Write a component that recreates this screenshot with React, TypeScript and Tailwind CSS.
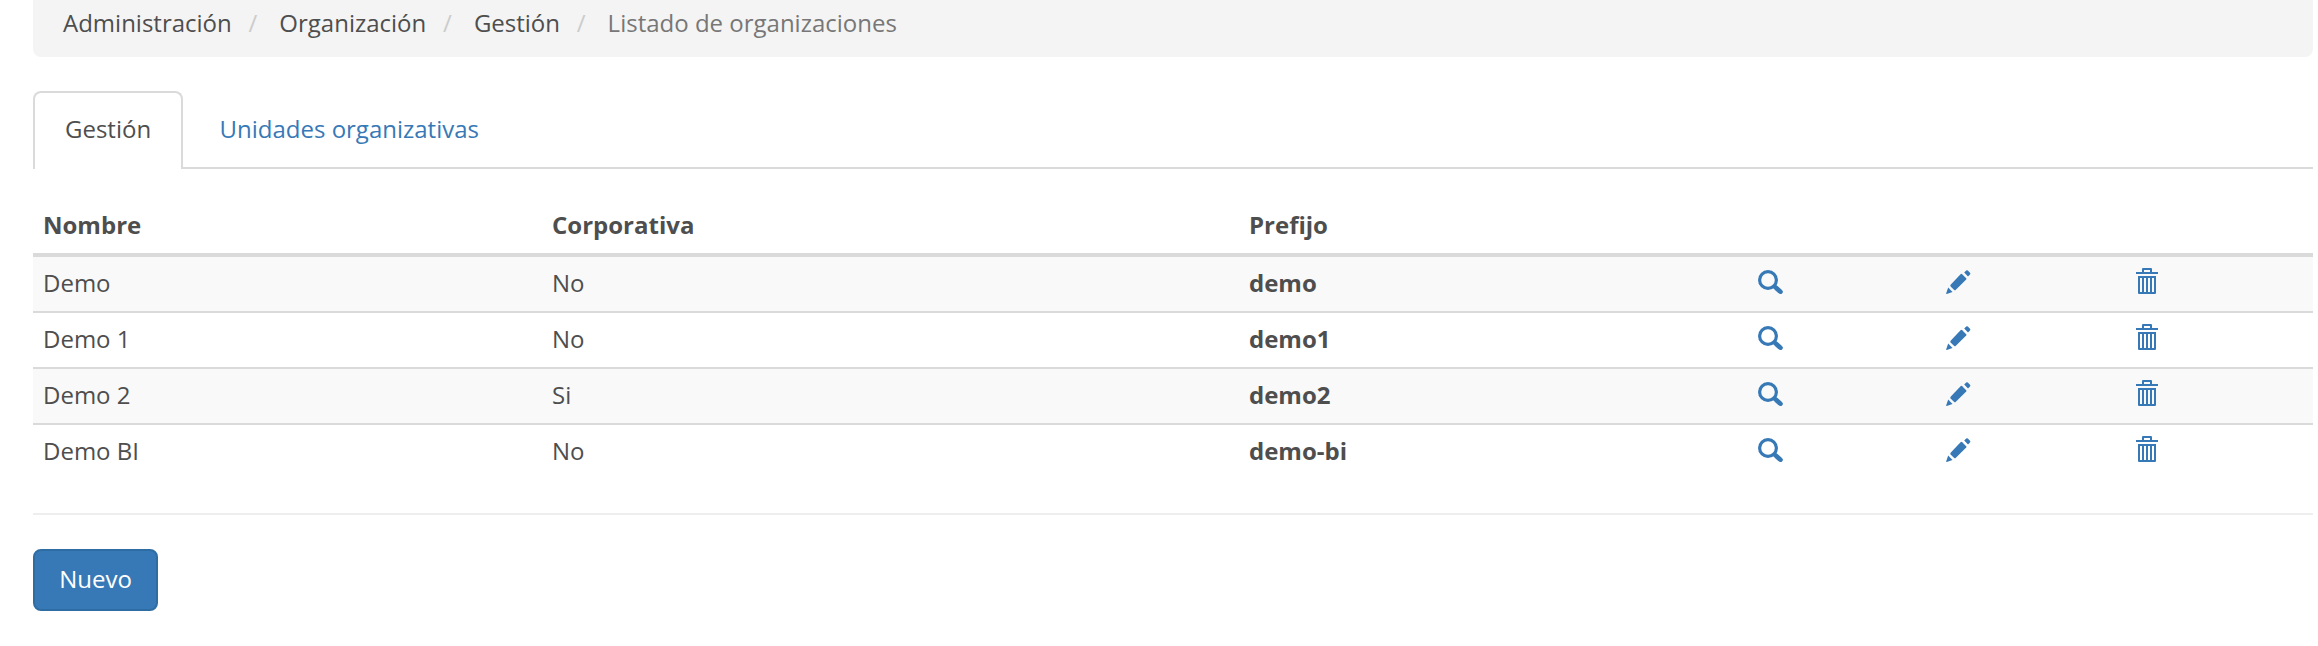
import React from "react";

type Org = { name: string; corporate: string; prefix: string };

const organizations: Org[] = [
  { name: "Demo", corporate: "No", prefix: "demo" },
  { name: "Demo 1", corporate: "No", prefix: "demo1" },
  { name: "Demo 2", corporate: "Si", prefix: "demo2" },
  { name: "Demo BI", corporate: "No", prefix: "demo-bi" },
];

const columns = "grid grid-cols-[509px_697px_509px_188px_189px_188px]";

function SearchIcon() {
  return (
    <svg className="block h-[26px] w-[26px]" viewBox="0 0 26 26" fill="none" stroke="#3779b6">
      <circle cx="10" cy="12" r="8.4" strokeWidth="3.2" />
      <path d="M15.5 17.5L22.2 23.6" strokeWidth="4.4" />
      <path d="M19 20.6L22.6 23.8" strokeWidth="4.4" strokeLinecap="round" />
    </svg>
  );
}

function PencilIcon() {
  return (
    <svg className="block h-[26px] w-[26px]" viewBox="0 0 26 26" fill="#3779b6">
      <path d="M18.2 4.6L20.2 2.6Q21 1.9 21.8 2.6L24 4.8Q24.8 5.6 24 6.4L22 8.4Z" />
      <path d="M14.8 6.1Q15.5 5.6 16.2 6.2L20.2 10.2Q20.8 10.8 20.2 11.5L9.6 22Q8.9 22.6 8.2 22L4.6 18.4Q4 17.6 4.6 16.8Z" />
      <path d="M2.2 19.6L6.5 23.9L0.8 25.9Q0 26 0.2 25.2Z" />
    </svg>
  );
}

function TrashIcon() {
  return (
    <svg className="block h-[26px] w-[26px]" viewBox="0 0 26 26" fill="#3779b6">
      <path
        fillRule="evenodd"
        d="M8 0H16Q17 0 17 1V4H23V6H1V4H7V1Q7 0 8 0ZM9 2V4H15V2ZM3 8H21V25Q21 26 20 26H4Q3 26 3 25ZM5 10V24H7V10ZM9 10V24H11V10ZM13 10V24H15V10ZM17 10V24H19V10Z"
      />
    </svg>
  );
}

function Breadcrumb() {
  const parents = ["Administración", "Organización", "Gestión"];
  return (
    <nav className="flex h-[57px] rounded-b-lg bg-[#f4f4f4] pt-[6px] pl-[30px]">
      {parents.map((item) => (
        <React.Fragment key={item}>
          <a>{item}</a>
          <span className="w-[47.6px] pl-[16.7px] text-[#ccc]">/</span>
        </React.Fragment>
      ))}
      <span className="text-[#777]">Listado de organizaciones</span>
    </nav>
  );
}

export default function App() {
  return (
    <main className="h-[646px] w-full overflow-hidden bg-white pr-[5px] pl-[33px] font-['Open_Sans',sans-serif] text-[24px] leading-[34px] text-[#4e4e4e]">
      <Breadcrumb />
      <div className="mt-[34px] flex h-[78px] border-b-2 border-[#dadada]">
        <a className="h-[78px] w-[150px] rounded-t-lg border-2 border-b-0 border-[#dadada] bg-white pt-[19px] pl-[30px]">
          Gestión
        </a>
        <a className="pt-[21px] pl-[36.5px] text-[#3779b6]">Unidades organizativas</a>
      </div>
      <div role="table" className="mt-[30px]">
        <div role="row" className={`${columns} h-[58px] border-b-4 border-[#dadada] pt-[9px] font-bold`}>
          <span className="pl-[10px]">Nombre</span>
          <span className="pl-[10px]">Corporativa</span>
          <span className="pl-[10px]">Prefijo</span>
        </div>
        {organizations.map((org) => (
          <div
            role="row"
            key={org.name}
            className={`${columns} h-[56px] border-b-2 border-[#dadada] pt-[9px] last:border-b-0 odd:bg-white even:bg-[#f9f9f9]`}
          >
            <span className="pl-[10px]">{org.name}</span>
            <span className="pl-[10px]">{org.corporate}</span>
            <span className="pl-[10px] font-bold">{org.prefix}</span>
            <a className="pt-[2px] pl-[10px]"><SearchIcon /></a>
            <a className="pt-[2px] pl-[10px]"><PencilIcon /></a>
            <a className="pt-[2px] pl-[10px]"><TrashIcon /></a>
          </div>
        ))}
      </div>
      <hr className="mt-[32px] border-t-2 border-[#eee]" />
      <button className="mt-[34px] block h-[62px] w-[125px] rounded-lg border-2 border-[#2e6da4] bg-[#3779b6] pb-[2px] text-white">
        Nuevo
      </button>
    </main>
  );
}
